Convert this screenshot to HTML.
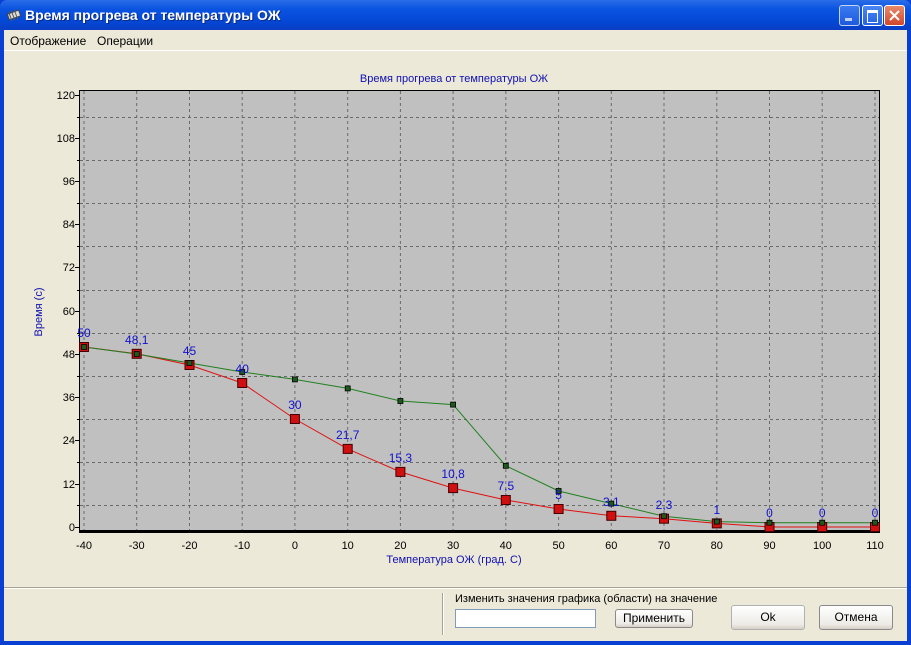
<!DOCTYPE html>
<html><head><meta charset="utf-8"><style>
html,body{margin:0;padding:0;}
body{width:911px;height:645px;overflow:hidden;position:relative;font-family:"Liberation Sans",Tahoma,sans-serif;background:#0a3fd4;}
.title{position:absolute;left:0;top:0;width:911px;height:30px;background:linear-gradient(#2b6de8,#0a54e0 30%,#0448d6 70%,#0a3ec4);border-radius:7px 7px 0 0;}
.title .t{position:absolute;left:25px;top:7px;color:#fff;font-weight:bold;font-size:14px;text-shadow:1px 1px #0b2a80;}
.btn{position:absolute;top:5px;width:21px;height:21px;border:1px solid #fff;border-radius:3px;box-sizing:border-box;background:linear-gradient(#4a86f3,#2763e2);}
.client{position:absolute;left:4px;top:30px;width:903px;height:611px;background:#ece9d8;}
.menu{position:absolute;left:0;top:0;width:903px;height:20px;font-size:12px;border-bottom:1px solid #fff;}
.menu span{position:absolute;top:4px;}
.sep{position:absolute;left:0;top:557px;width:903px;height:1px;background:#a7a493;border-bottom:1px solid #fff;}
.vsep{position:absolute;left:438px;top:563px;width:1px;height:42px;background:#a7a493;border-right:1px solid #fff;}
.lbl{position:absolute;left:451px;top:563px;font-size:11px;}
.inp{position:absolute;left:451px;top:579px;width:141px;height:19px;background:#fff;border:1px solid #7f9db9;box-sizing:border-box;}
.b{position:absolute;border:1px solid #003c74;border-radius:3px;box-sizing:border-box;background:linear-gradient(#fff,#ecebe6 80%,#d6d0c5);font-size:12px;text-align:center;}
</style></head><body>
<div class="title">
<svg style="position:absolute;left:6px;top:9px" width="16" height="12"><g transform="rotate(-20 8 6)"><rect x="2" y="3" width="12" height="6" fill="#ddd" stroke="#444"/><line x1="4" y1="1" x2="4" y2="11" stroke="#555"/><line x1="7" y1="1" x2="7" y2="11" stroke="#555"/><line x1="10" y1="1" x2="10" y2="11" stroke="#555"/></g></svg>
<div class="t">Время прогрева от температуры ОЖ</div>
<div class="btn" style="left:839px;opacity:.75"><div style="position:absolute;left:5px;top:12px;width:7px;height:3px;background:#fff"></div></div>
<div class="btn" style="left:862px"><div style="position:absolute;left:4px;top:4px;width:9px;height:9px;border:1px solid #fff;border-top:3px solid #fff"></div></div>
<div class="btn" style="left:884px;background:linear-gradient(#e88a6a,#d2462a)"><svg width="19" height="19" style="position:absolute;left:0;top:0"><path d="M5 5L14 14M14 5L5 14" stroke="#fff" stroke-width="2"/></svg></div>
</div>
<div class="client">
<div class="menu"><span style="left:6px">Отображение</span><span style="left:93px">Операции</span></div>
<svg style="position:absolute;left:-4px;top:-30px" width="911" height="645" font-family="Liberation Sans,sans-serif" font-size="11">
<text x="454" y="82" fill="#1010b0" text-anchor="middle">Время прогрева от температуры ОЖ</text>
<rect x="79.5" y="90.5" width="800" height="441" fill="#c0c0c0" stroke="#000"/>
<g stroke="#6a6a6a" stroke-dasharray="3,3" stroke-width="1">
<path d="M84 91V531M136.7 91V531M189.5 91V531M242.2 91V531M294.9 91V531M347.7 91V531M400.4 91V531M453.1 91V531M505.8 91V531M558.6 91V531M611.3 91V531M664 91V531M716.8 91V531M769.5 91V531M822.2 91V531M875 91V531"/>
<path d="M80 505.5H879M80 462.5H879M80 419.5H879M80 376.5H879M80 333.5H879M80 290.5H879M80 246.5H879M80 203.5H879M80 160.5H879M80 117.5H879"/>
</g>
<line x1="79" y1="531.5" x2="880" y2="531.5" stroke="#000" stroke-width="3"/>
<g stroke="#000">
<path d="M75 95.5H79M75 138.5H79M75 181.5H79M75 224.5H79M75 267.5H79M75 311.5H79M75 354.5H79M75 397.5H79M75 440.5H79M75 484.5H79M75 527.5H79"/>
<path d="M77 117.5H79M77 160.5H79M77 203.5H79M77 246.5H79M77 290.5H79M77 333.5H79M77 376.5H79M77 419.5H79M77 462.5H79M77 505.5H79"/>
</g>
<g text-anchor="end" fill="#000">
<text x="75" y="99">120</text><text x="75" y="142">108</text><text x="75" y="185">96</text><text x="75" y="228">84</text><text x="75" y="271">72</text><text x="75" y="315">60</text><text x="75" y="358">48</text><text x="75" y="401">36</text><text x="75" y="444">24</text><text x="75" y="488">12</text><text x="75" y="531">0</text>
</g>
<g text-anchor="middle" fill="#000">
<text x="84" y="549">-40</text><text x="136.7" y="549">-30</text><text x="189.5" y="549">-20</text><text x="242.2" y="549">-10</text><text x="294.9" y="549">0</text><text x="347.7" y="549">10</text><text x="400.4" y="549">20</text><text x="453.1" y="549">30</text><text x="505.8" y="549">40</text><text x="558.6" y="549">50</text><text x="611.3" y="549">60</text><text x="664" y="549">70</text><text x="716.8" y="549">80</text><text x="769.5" y="549">90</text><text x="822.2" y="549">100</text><text x="875" y="549">110</text>
</g>
<text x="454" y="563" fill="#1010b0" text-anchor="middle">Температура ОЖ (град. С)</text>
<text transform="translate(42 312) rotate(-90)" fill="#1010b0" text-anchor="middle">Время (с)</text>
<polyline fill="none" stroke="#e01010" points="84,347 136.7,353.8 189.5,365 242.2,383 294.9,419 347.7,448.9 400.4,471.9 453.1,488.1 505.8,500 558.6,509 611.3,515.8 664,518.7 716.8,523.4 769.5,527 822.2,527 875,527"/>
<polyline fill="none" stroke="#208020" points="84,347 136.7,354 189.5,363 242.2,372 294.9,379.4 347.7,388.4 400.4,401 453.1,404.6 505.8,465.8 558.6,491 611.3,503.6 664,516.2 716.8,521.6 769.5,522.7 822.2,522.7 875,522.7"/>
<g fill="#d01010" stroke="#400" stroke-width="1">
<rect x="79.5" y="342.5" width="9" height="9"/><rect x="132.2" y="349.3" width="9" height="9"/><rect x="185" y="360.5" width="9" height="9"/><rect x="237.7" y="378.5" width="9" height="9"/><rect x="290.4" y="414.5" width="9" height="9"/><rect x="343.2" y="444.4" width="9" height="9"/><rect x="395.9" y="467.4" width="9" height="9"/><rect x="448.6" y="483.6" width="9" height="9"/><rect x="501.3" y="495.5" width="9" height="9"/><rect x="554.1" y="504.5" width="9" height="9"/><rect x="606.8" y="511.3" width="9" height="9"/><rect x="659.5" y="514.2" width="9" height="9"/><rect x="712.3" y="518.9" width="9" height="9"/><rect x="765" y="522.5" width="9" height="9"/><rect x="817.7" y="522.5" width="9" height="9"/><rect x="870.5" y="522.5" width="9" height="9"/>
</g>
<g fill="#1e5a1e" stroke="#000" stroke-width=".8">
<rect x="81.5" y="344.5" width="5" height="5"/><rect x="134.2" y="351.5" width="5" height="5"/><rect x="187" y="360.5" width="5" height="5"/><rect x="239.7" y="369.5" width="5" height="5"/><rect x="292.4" y="376.9" width="5" height="5"/><rect x="345.2" y="385.9" width="5" height="5"/><rect x="397.9" y="398.5" width="5" height="5"/><rect x="450.6" y="402.1" width="5" height="5"/><rect x="503.3" y="463.3" width="5" height="5"/><rect x="556.1" y="488.5" width="5" height="5"/><rect x="608.8" y="501.1" width="5" height="5"/><rect x="661.5" y="513.7" width="5" height="5"/><rect x="714.3" y="519.1" width="5" height="5"/><rect x="767" y="520.2" width="5" height="5"/><rect x="819.7" y="520.2" width="5" height="5"/><rect x="872.5" y="520.2" width="5" height="5"/>
</g>
<g text-anchor="middle" fill="#1010d0" font-size="12">
<text x="84" y="337">50</text><text x="136.7" y="344">48,1</text><text x="189.5" y="355">45</text><text x="242.2" y="373">40</text><text x="294.9" y="409">30</text><text x="347.7" y="439">21,7</text><text x="400.4" y="462">15,3</text><text x="453.1" y="478">10,8</text><text x="505.8" y="490">7,5</text><text x="558.6" y="499">5</text><text x="611.3" y="506">3,1</text><text x="664" y="509">2,3</text><text x="716.8" y="514">1</text><text x="769.5" y="517">0</text><text x="822.2" y="517">0</text><text x="875" y="517">0</text>
</g>
</svg>
<div class="sep"></div>
<div class="vsep"></div>
<div class="lbl">Изменить значения графика (области) на значение</div>
<div class="inp"></div>
<div class="b" style="left:611px;top:579px;width:78px;height:19px;line-height:17px;border-color:#8a8a8a">Применить</div>
<div class="b" style="left:727px;top:575px;width:74px;height:25px;line-height:23px;border-color:#b0b0b0">Ok</div>
<div class="b" style="left:815px;top:575px;width:74px;height:25px;line-height:23px;border-color:#8a8a8a">Отмена</div>
</div>
</body></html>
